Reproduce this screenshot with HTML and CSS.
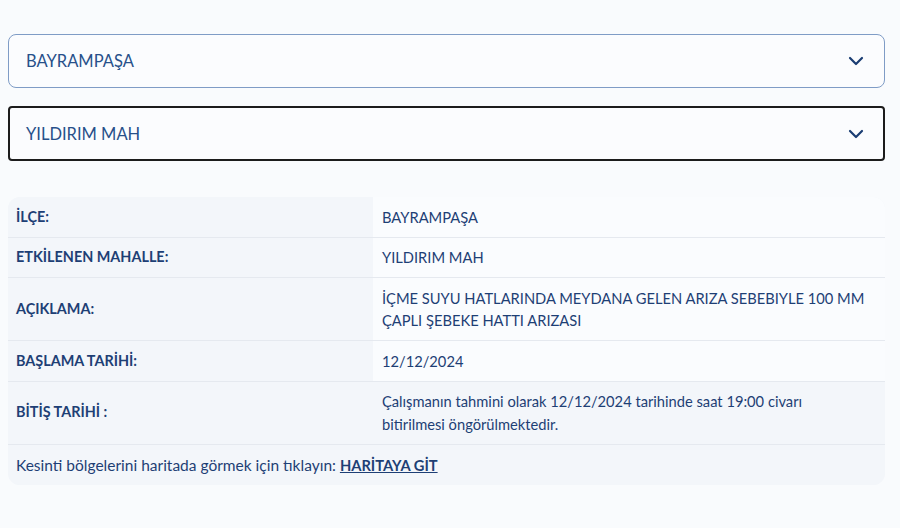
FILE: index.html
```html
<!DOCTYPE html>
<html lang="tr">
<head>
  <meta charset="UTF-8">
  <meta name="viewport" content="width=device-width, initial-scale=1">
  <title>Arıza Kesinti Sorgulama</title>
  <link rel="stylesheet" href="styles.css">
</head>
<body>
  <div class="page">

    <!-- İlçe / mahalle seçimi -->
    <div class="select-box">
      <span class="select-text">BAYRAMPAŞA</span>
      <svg class="chevron" width="16" height="10" viewBox="0 0 16 10"><path d="M2 2l6 6 6-6" fill="none" stroke="currentColor" stroke-width="2.2" stroke-linecap="round" stroke-linejoin="round"/></svg>
    </div>

    <div class="select-box focused">
      <span class="select-text">YILDIRIM MAH</span>
      <svg class="chevron" width="16" height="10" viewBox="0 0 16 10"><path d="M2 2l6 6 6-6" fill="none" stroke="currentColor" stroke-width="2.2" stroke-linecap="round" stroke-linejoin="round"/></svg>
    </div>

    <!-- Kesinti bilgileri -->
    <table class="info-table">
      <tr>
        <th>İLÇE:</th>
        <td>BAYRAMPAŞA</td>
      </tr>
      <tr>
        <th>ETKİLENEN MAHALLE:</th>
        <td>YILDIRIM MAH</td>
      </tr>
      <tr>
        <th>AÇIKLAMA:</th>
        <td>İÇME SUYU HATLARINDA MEYDANA GELEN ARIZA SEBEBIYLE 100 MM ÇAPLI ŞEBEKE HATTI ARIZASI</td>
      </tr>
      <tr>
        <th>BAŞLAMA TARİHİ:</th>
        <td>12/12/2024</td>
      </tr>
      <tr class="shaded">
        <th>BİTİŞ TARİHİ :</th>
        <td>Çalışmanın tahmini olarak 12/12/2024 tarihinde saat 19:00 civarı bitirilmesi öngörülmektedir.</td>
      </tr>
      <tr class="footer-row">
        <td colspan="2">Kesinti bölgelerini haritada görmek için tıklayın: <a href="#">HARİTAYA GİT</a></td>
      </tr>
    </table>

  </div>
</body>
</html>
```

FILE: styles.css
```css
body {
  margin: 0;
  background-color: #f9fbfd;
  font-family: Lato, "Noto Sans", sans-serif;
  color: #1e3f75;
}
.page {
  padding: 34px 15px 0 8px;
}
.select-box {
  display: flex;
  align-items: center;
  justify-content: space-between;
  height: 52px;
  padding: 0 20px 0 17px;
  margin-bottom: 18px;
  border: 1px solid #7f9cc6;
  border-radius: 8px;
  background-color: #fbfcfe;
}
.select-box.focused {
  height: 51px;
  padding: 0 19px 0 16px;
  border: 2px solid #1c1c1c;
  border-radius: 4px;
}
.select-text {
  font-size: 16.5px;
  color: #27508a;
}
.chevron {
  color: #1a3d73;
}
.info-table {
  width: 100%;
  margin-top: 36px;
  border-collapse: collapse;
  border-radius: 12px;
  overflow: hidden;
  background-color: #f3f6fa;
  font-size: 14.7px;
  line-height: 22.5px;
}
.info-table th,
.info-table td {
  padding: 8.5px 19px 8.5px 8px;
  text-align: left;
  vertical-align: middle;
  border-bottom: 1px solid #e5e9ef;
}
.info-table th {
  width: 338px;
  padding-left: 8px;
  font-weight: 700;
  font-size: 14.4px;
  color: #1e3f75;
  background-color: #f3f6fa;
}
.info-table td {
  padding-left: 9px;
  font-weight: 400;
  background-color: #fafcfe;
}
.info-table tr.shaded td,
.info-table tr.footer-row td {
  background-color: #f3f6fa;
}
.info-table tr.footer-row td {
  padding: 9px 8px;
  font-size: 15.5px;
  border-bottom: none;
}
.info-table a {
  font-weight: 700;
  font-size: 14.7px;
  color: #1e3f75;
  text-decoration: underline;
}
```
